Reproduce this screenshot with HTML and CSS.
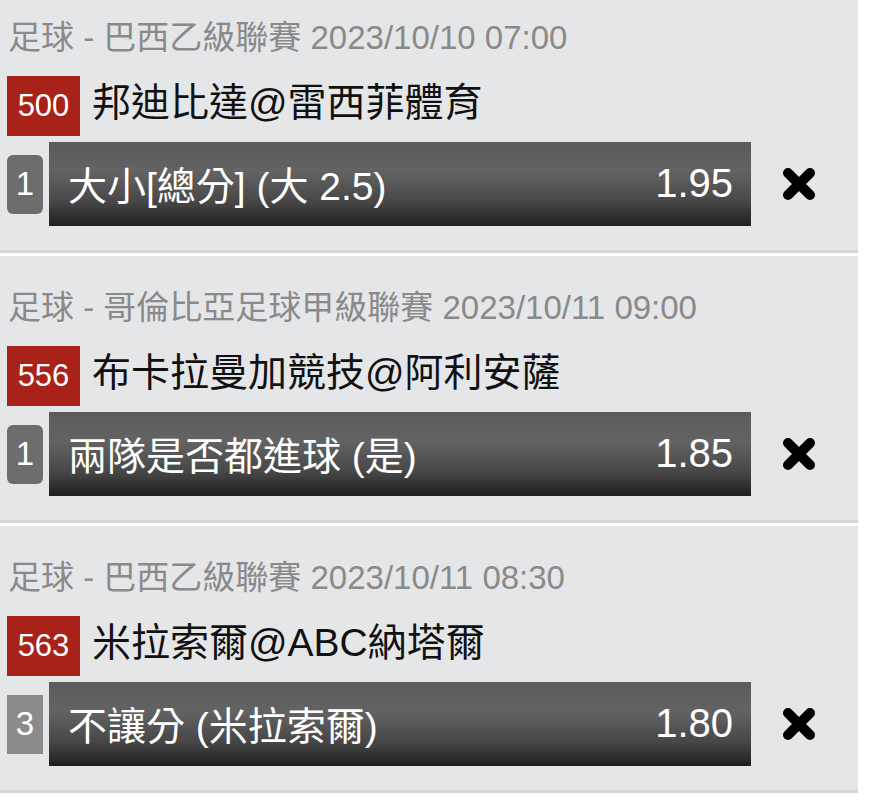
FILE: index.html
```html
<!DOCTYPE html>
<html lang="zh-Hant">
  <head>
    <meta charset="utf-8">
    <meta name="viewport" content="width=device-width">
    <title>投注單</title>
    <link rel="stylesheet" href="styles.css">
  </head>
  <body>

    <div class="slip">

      <div class="bet">
        <div class="event">足球 - 巴西乙級聯賽 2023/10/10 07:00</div>
        <div class="match">
          <span class="matchNo">500</span>
          <span class="teams">邦迪比達@雷西菲體育</span>
        </div>
        <div class="pick">
          <span class="leg round">1</span>
          <div class="market">
            <span>大小[總分] (大 2.5)</span>
            <span class="odds">1.95</span>
          </div>
          <div class="remove">
            <svg viewBox="0 0 38 38" width="38" height="38"><path d="M8 8 L30 30 M30 8 L8 30" stroke="#000" stroke-width="10" stroke-linecap="round"/></svg>
          </div>
        </div>
      </div>

      <div class="bet">
        <div class="event">足球 - 哥倫比亞足球甲級聯賽 2023/10/11 09:00</div>
        <div class="match">
          <span class="matchNo">556</span>
          <span class="teams">布卡拉曼加競技@阿利安薩</span>
        </div>
        <div class="pick">
          <span class="leg round">1</span>
          <div class="market">
            <span>兩隊是否都進球 (是)</span>
            <span class="odds">1.85</span>
          </div>
          <div class="remove">
            <svg viewBox="0 0 38 38" width="38" height="38"><path d="M8 8 L30 30 M30 8 L8 30" stroke="#000" stroke-width="10" stroke-linecap="round"/></svg>
          </div>
        </div>
      </div>

      <div class="bet">
        <div class="event">足球 - 巴西乙級聯賽 2023/10/11 08:30</div>
        <div class="match">
          <span class="matchNo">563</span>
          <span class="teams">米拉索爾@ABC納塔爾</span>
        </div>
        <div class="pick">
          <span class="leg light">3</span>
          <div class="market">
            <span>不讓分 (米拉索爾)</span>
            <span class="odds">1.80</span>
          </div>
          <div class="remove">
            <svg viewBox="0 0 38 38" width="38" height="38"><path d="M8 8 L30 30 M30 8 L8 30" stroke="#000" stroke-width="10" stroke-linecap="round"/></svg>
          </div>
        </div>
      </div>

    </div>

  </body>
</html>
```

FILE: styles.css
```css
body {
  margin: 0;
  background-color: #ffffff;
  overflow: hidden;
  font-family: "Liberation Sans", "Noto Sans CJK TC", sans-serif;
}

.slip
{
  width: 858px;
  margin-top: -14px;
}

.bet
{
  background-color: #e5e6e8;
  border-bottom: 3px solid #d5d6d8;
  margin-bottom: 3px;
  padding: 32px 0 24px 7px;
}

.event
{
  height: 40px;
  line-height: 40px;
  font-size: 33px;
  color: #8a8a8a;
  margin-bottom: 18px;
  padding-left: 1px;
  white-space: nowrap;
}

.match
{
  display: flex;
  align-items: center;
  height: 60px;
  margin-bottom: 6px;
}

.matchNo
{
  display: flex;
  align-items: center;
  justify-content: center;
  width: 73px;
  height: 60px;
  background-color: #a82219;
  color: #ffffff;
  font-size: 31px;
}

.teams
{
  margin-left: 12px;
  font-size: 39px;
  line-height: 50px;
  color: #111111;
  margin-top: -6px;
}

.pick
{
  display: flex;
  align-items: center;
  height: 84px;
}

.leg
{
  display: flex;
  align-items: center;
  justify-content: center;
  width: 36px;
  height: 59px;
  color: #ffffff;
  font-size: 33px;
  margin-right: 6px;
}

.round
{
  background-color: #6d6d6d;
  border-radius: 6px;
}

.light
{
  background-color: #8b8b8b;
}

.market
{
  display: flex;
  align-items: center;
  justify-content: space-between;
  width: 702px;
  height: 84px;
  box-sizing: border-box;
  padding: 0 18px 2px 19px;
  background: linear-gradient(to bottom, #5b5b5b 0%, #636363 35%, #464646 72%, #1e1e1e 100%);
  color: #ffffff;
  font-size: 39px;
  white-space: nowrap;
}

.odds
{
  font-size: 40px;
}

.remove
{
  display: flex;
  align-items: center;
  padding-left: 29px;
  filter: blur(0.6px);
}
```
